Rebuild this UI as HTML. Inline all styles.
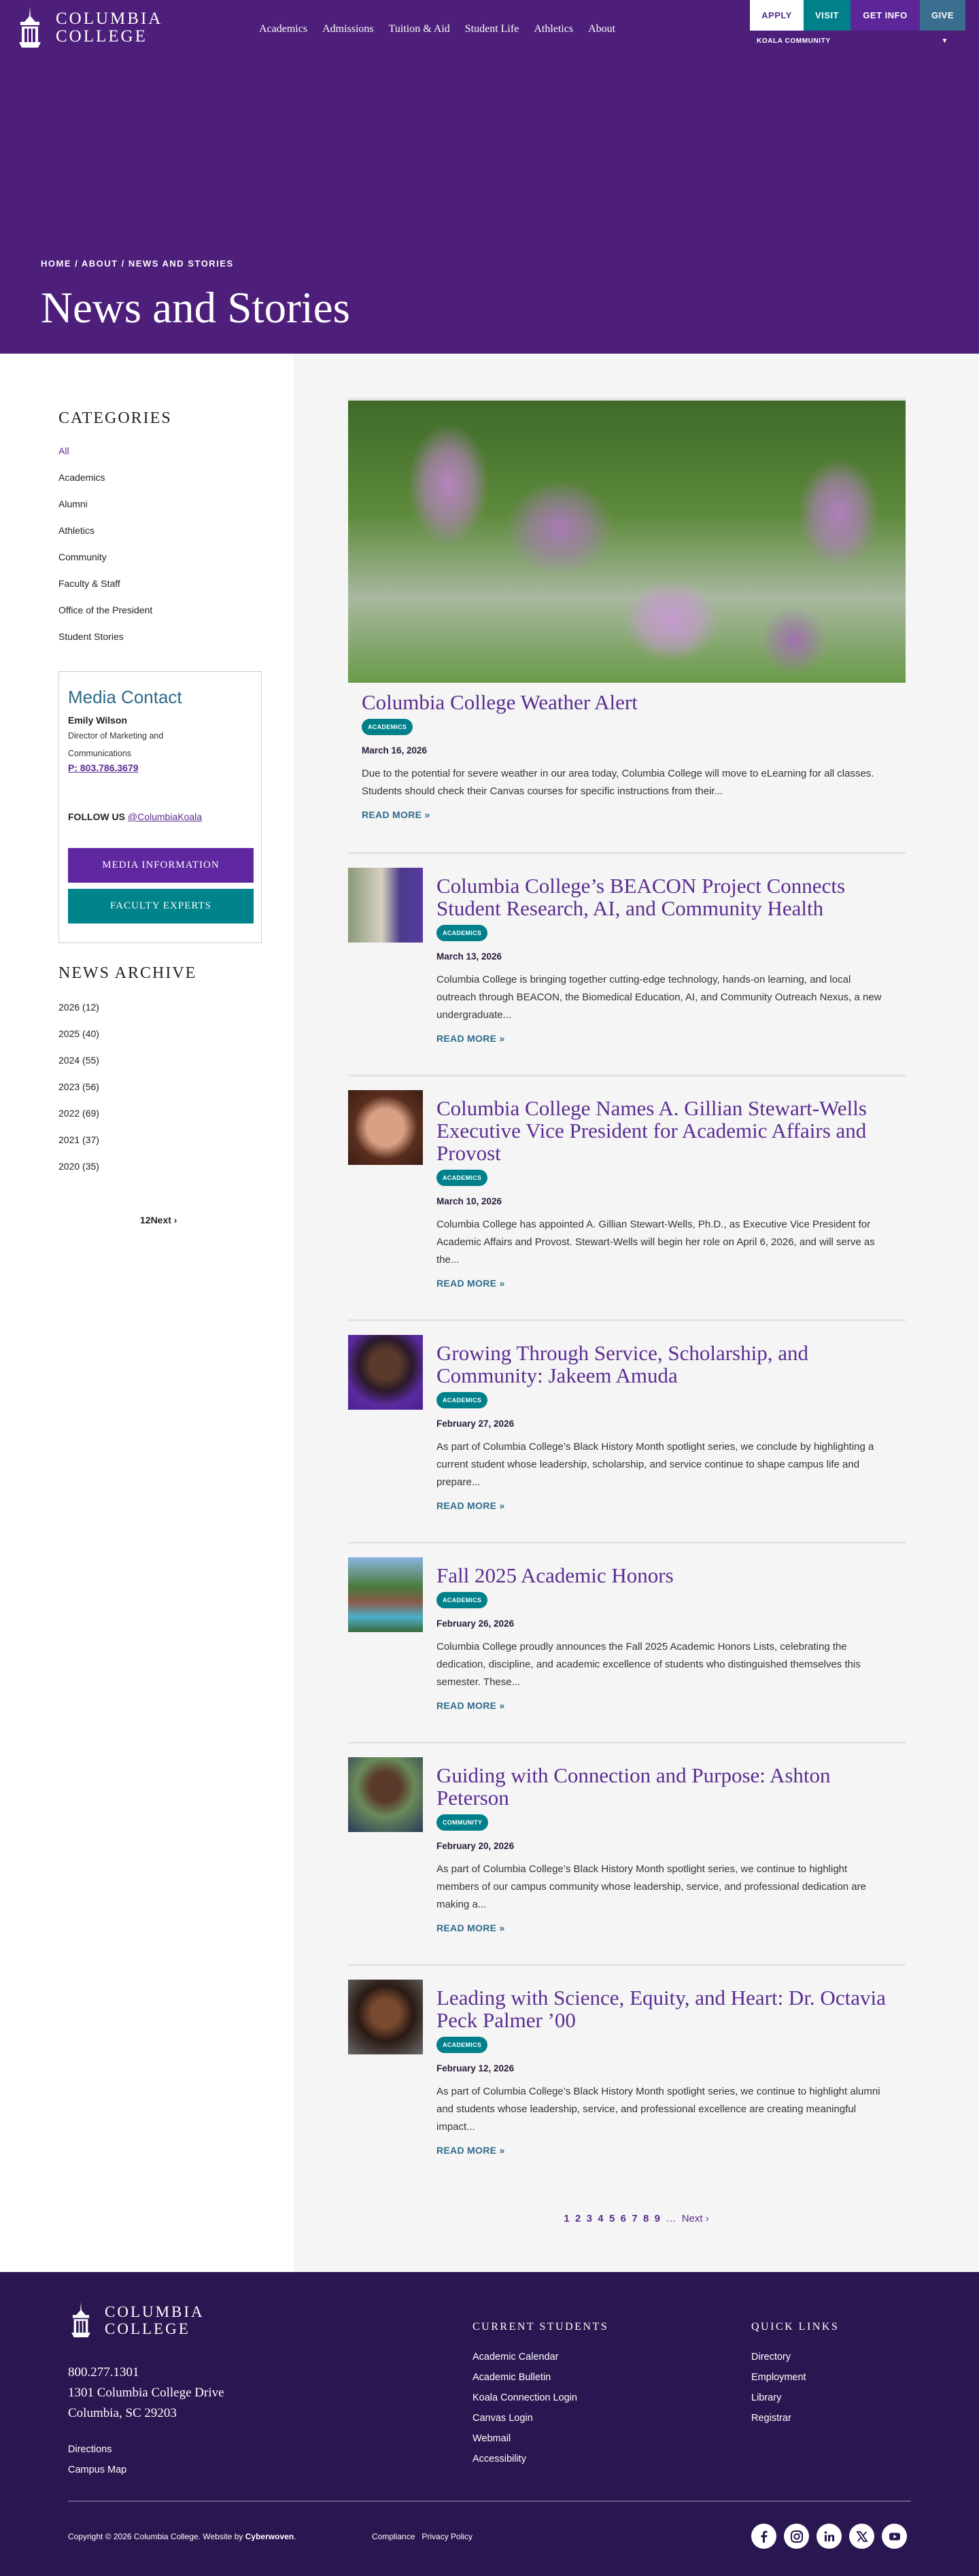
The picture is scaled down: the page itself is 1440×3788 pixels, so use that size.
<!DOCTYPE html>
<html><head><meta charset="utf-8">
<style>
*{margin:0;padding:0;box-sizing:border-box}
body{width:1440px;height:3788px;font-family:"Liberation Sans",sans-serif;background:#fff;color:#222;position:relative;overflow:hidden}
a{color:inherit;text-decoration:none}
.hero{position:absolute;left:0;top:0;width:1440px;height:520px;background:#4d1f7b}
.logo{position:absolute;left:22px;top:10px;display:flex;align-items:center}
.logo .t{font-family:"Liberation Serif",serif;color:#fff;font-size:25px;letter-spacing:3px;line-height:26px;margin-left:16px}
.nav{position:absolute;left:381px;top:34px;display:flex;gap:22px;font-family:"Liberation Serif",serif;color:#fff;font-size:16px}
.btns{position:absolute;left:1103px;top:0;display:flex;height:45px}
.btns div{display:flex;align-items:center;justify-content:center;font-weight:bold;font-size:13px;color:#fff;letter-spacing:.5px}
.koala{position:absolute;left:1113px;top:55px;width:282px;color:#fff;font-size:10px;font-weight:bold;letter-spacing:.6px;display:flex;justify-content:space-between}
.crumb{position:absolute;left:60px;top:380px;color:#fff;font-size:13px;font-weight:bold;letter-spacing:1.5px}
.h1{position:absolute;left:60px;top:416px;color:#fff;font-family:"Liberation Serif",serif;font-size:65px;line-height:74px}
.side{position:absolute;left:0;top:520px;width:432px;height:2821px;background:#fff}
.main{position:absolute;left:432px;top:520px;width:1008px;height:2821px;background:#f5f5f5}
.cat h2,.arch h2{font-family:"Liberation Serif",serif;font-weight:normal;font-size:24px;letter-spacing:2px;color:#222}
.list div{font-size:14px;height:39px;line-height:20px}
.mc{position:absolute;left:86px;top:987px;width:299px;height:400px;border:1px solid #ccc;background:#fff;padding:0 13px}
.mc h3{font-weight:normal;font-size:26px;color:#2c6a86;margin-top:22px;font-family:"Liberation Sans",sans-serif}
.btn{display:flex;align-items:center;justify-content:center;width:273px;height:51px;color:#fff;font-family:"Liberation Serif",serif;font-size:15px;letter-spacing:1px}
.items{position:absolute;left:512px;top:585px;width:820px}
.item{border-top:3px solid #e3e3e3;position:relative}
.item .thumb{position:absolute;left:0;top:20px;width:110px;height:110px}
.c{margin-left:130px}
.title{font-family:"Liberation Serif",serif;font-size:31px;line-height:33px;color:#5b2d91;white-space:nowrap}
.badge{display:inline-block;background:#00808a;color:#fff;font-size:9px;font-weight:bold;height:24px;line-height:24px;padding:0 9px;border-radius:12px;letter-spacing:.3px}
.date{font-size:13.5px;font-weight:bold;color:#2a1a3a;line-height:18px}
.ex{font-size:15px;line-height:26px;color:#333;white-space:nowrap}
.rm{font-size:14px;font-weight:bold;color:#2d6b8a;line-height:18px;letter-spacing:.3px}
.pg{position:absolute;left:0;top:3254px;width:1440px;padding-left:432px;text-align:center;color:#5b2d91;font-size:15px;font-weight:bold}
.foot{position:absolute;left:0;top:3341px;width:1440px;height:447px;background:#2a1650;color:#fff}
.fh{font-family:"Liberation Serif",serif;font-size:16px;letter-spacing:2.5px}
.fl div{font-size:14.5px;height:30px}
.soc{position:absolute;left:1105px;top:3711px;display:flex;gap:11px}
.soc div{width:37px;height:37px;border-radius:50%;background:#fff;display:flex;align-items:center;justify-content:center}
</style></head><body>
<div class="hero">
 <div class="logo">
  <svg width="44" height="62" viewBox="0 0 44 62"><path d="M22 0 L23 14 L30 22 H14 L21 14Z" fill="#fff"/><rect x="8" y="22" width="28" height="5" fill="#fff"/><rect x="10" y="29" width="24" height="3" fill="#fff"/><rect x="10" y="32" width="4" height="20" fill="#fff"/><rect x="30" y="32" width="4" height="20" fill="#fff"/><rect x="18" y="32" width="2" height="20" fill="#fff"/><rect x="24" y="32" width="2" height="20" fill="#fff"/><path d="M6 52 H38 L34 60 H10Z" fill="#fff"/></svg>
  <div class="t">COLUMBIA<br>COLLEGE</div>
 </div>
 <div class="nav"><span>Academics</span><span>Admissions</span><span>Tuition &amp; Aid</span><span>Student Life</span><span>Athletics</span><span>About</span></div>
 <div class="btns"><div style="width:79px;background:#fff;color:#5b2d91">APPLY</div><div style="width:69px;background:#00818a">VISIT</div><div style="width:102px;background:#5c2698">GET INFO</div><div style="width:67px;background:#3a6e8e">GIVE</div></div>
 <div class="koala"><span>KOALA COMMUNITY</span><span>▼</span></div>
 <div class="crumb">HOME / ABOUT / NEWS AND STORIES</div>
 <div class="h1">News and Stories</div>
</div>
<div class="side">
 <div class="cat" style="position:absolute;left:86px;top:82px">
  <h2>CATEGORIES</h2>
  <div class="list" style="margin-top:24px"><div style="color:#5b2d91">All</div><div>Academics</div><div>Alumni</div><div>Athletics</div><div>Community</div><div>Faculty &amp; Staff</div><div>Office of the President</div><div>Student Stories</div></div>
 </div>
</div>
<div class="main"></div>
<div class="mc">
 <h3>Media Contact</h3>
 <div style="font-size:14px;font-weight:bold;margin-top:10px">Emily Wilson</div>
 <div style="font-size:12.5px;line-height:26px;margin-top:2px;color:#333">Director of Marketing and<br>Communications</div>
 <div style="font-size:14px;font-weight:bold;color:#5b2d91;text-decoration:underline">P: 803.786.3679</div>
 <div style="font-size:14px;font-weight:bold;margin-top:56px">FOLLOW US <span style="color:#5b2d91;text-decoration:underline;font-weight:normal">@ColumbiaKoala</span></div>
 <div class="btn" style="background:#5f28a0;margin-top:38px">MEDIA INFORMATION</div>
 <div class="btn" style="background:#00838a;margin-top:9px">FACULTY EXPERTS</div>
</div>
<div class="arch" style="position:absolute;left:86px;top:1418px">
 <h2>NEWS ARCHIVE</h2>
 <div class="list" style="margin-top:26px;line-height:20px"><div>2026 (12)</div><div>2025 (40)</div><div>2024 (55)</div><div>2023 (56)</div><div>2022 (69)</div><div>2021 (37)</div><div>2020 (35)</div></div>
</div>
<div style="position:absolute;left:206px;top:1786px;font-size:14px;font-weight:bold">12Next ›</div>

<div class="items">
 <div class="item" style="padding:1px 0 46px">
  <div style="height:415px;background:radial-gradient(ellipse 60px 90px at 18% 30%,#b784c0 0,rgba(183,132,192,.6) 60%,transparent 100%),radial-gradient(ellipse 70px 60px at 58% 78%,#c69ad0 0,rgba(198,154,208,.6) 60%,transparent 100%),radial-gradient(ellipse 60px 80px at 88% 40%,#b07fbe 0,rgba(176,127,190,.6) 60%,transparent 100%),radial-gradient(ellipse 80px 70px at 38% 45%,#a87ab6 0,rgba(168,122,182,.5) 60%,transparent 100%),radial-gradient(ellipse 50px 50px at 80% 85%,#a070b0 0,transparent 100%),linear-gradient(180deg,#3f6a2a,#5d8a3a 40%,#a9b8a0 70%,#6a9a48);"></div>
  <div style="padding-left:20px">
   <div class="title" style="margin-top:12px">Columbia College Weather Alert</div>
   <div style="margin-top:8px"><span class="badge">ACADEMICS</span></div>
   <div class="date" style="margin-top:14px">March 16, 2026</div>
   <div class="ex" style="margin-top:12px">Due to the potential for severe weather in our area today, Columbia College will move to eLearning for all classes.<br>Students should check their Canvas courses for specific instructions from their...</div>
   <div class="rm" style="margin-top:12px">READ MORE »</div>
  </div>
 </div>
 <div class="item" style="padding:20px 0 44px">
  <div class="thumb" style="background:linear-gradient(90deg,#8a9a7a,#d8d0c0 45%,#4a3a8a 70%,#5a3aa0)"></div>
  <div class="c"><div class="title" style="margin-top:10px">Columbia College’s BEACON Project Connects<br>Student Research, AI, and Community Health</div>
  <div style="margin-top:8px"><span class="badge">ACADEMICS</span></div>
  <div class="date" style="margin-top:14px">March 13, 2026</div>
  <div class="ex" style="margin-top:12px">Columbia College is bringing together cutting-edge technology, hands-on learning, and local<br>outreach through BEACON, the Biomedical Education, AI, and Community Outreach Nexus, a new<br>undergraduate...</div>
  <div class="rm" style="margin-top:12px">READ MORE »</div></div>
 </div>
 <div class="item" style="padding:20px 0 44px">
  <div class="thumb" style="background:radial-gradient(circle at 50% 50%,#d8a084 0 35%,#5a2e1e 60%,#3a1e14)"></div>
  <div class="c"><div class="title" style="margin-top:10px">Columbia College Names A. Gillian Stewart-Wells<br>Executive Vice President for Academic Affairs and<br>Provost</div>
  <div style="margin-top:8px"><span class="badge">ACADEMICS</span></div>
  <div class="date" style="margin-top:14px">March 10, 2026</div>
  <div class="ex" style="margin-top:12px">Columbia College has appointed A. Gillian Stewart-Wells, Ph.D., as Executive Vice President for<br>Academic Affairs and Provost. Stewart-Wells will begin her role on April 6, 2026, and will serve as<br>the...</div>
  <div class="rm" style="margin-top:12px">READ MORE »</div></div>
 </div>
 <div class="item" style="padding:20px 0 44px">
  <div class="thumb" style="background:radial-gradient(circle at 50% 40%,#5a3a2a 0 25%,#2a1a2a 45%,#5a2aa0 70%,#4a2090)"></div>
  <div class="c"><div class="title" style="margin-top:10px">Growing Through Service, Scholarship, and<br>Community: Jakeem Amuda</div>
  <div style="margin-top:8px"><span class="badge">ACADEMICS</span></div>
  <div class="date" style="margin-top:14px">February 27, 2026</div>
  <div class="ex" style="margin-top:12px">As part of Columbia College’s Black History Month spotlight series, we conclude by highlighting a<br>current student whose leadership, scholarship, and service continue to shape campus life and<br>prepare...</div>
  <div class="rm" style="margin-top:12px">READ MORE »</div></div>
 </div>
 <div class="item" style="padding:20px 0 44px">
  <div class="thumb" style="background:linear-gradient(180deg,#8ab4e0,#4a7a3a 40%,#8a5a4a 60%,#4ab0c8 80%,#3a6a3a)"></div>
  <div class="c"><div class="title" style="margin-top:10px">Fall 2025 Academic Honors</div>
  <div style="margin-top:8px"><span class="badge">ACADEMICS</span></div>
  <div class="date" style="margin-top:14px">February 26, 2026</div>
  <div class="ex" style="margin-top:12px">Columbia College proudly announces the Fall 2025 Academic Honors Lists, celebrating the<br>dedication, discipline, and academic excellence of students who distinguished themselves this<br>semester. These...</div>
  <div class="rm" style="margin-top:12px">READ MORE »</div></div>
 </div>
 <div class="item" style="padding:20px 0 44px">
  <div class="thumb" style="background:radial-gradient(circle at 50% 40%,#5a3a2a 0 25%,#6a8a5a 50%,#2a3a5a)"></div>
  <div class="c"><div class="title" style="margin-top:10px">Guiding with Connection and Purpose: Ashton<br>Peterson</div>
  <div style="margin-top:8px"><span class="badge">COMMUNITY</span></div>
  <div class="date" style="margin-top:14px">February 20, 2026</div>
  <div class="ex" style="margin-top:12px">As part of Columbia College’s Black History Month spotlight series, we continue to highlight<br>members of our campus community whose leadership, service, and professional dedication are<br>making a...</div>
  <div class="rm" style="margin-top:12px">READ MORE »</div></div>
 </div>
 <div class="item" style="padding:20px 0 44px">
  <div class="thumb" style="background:radial-gradient(circle at 50% 45%,#7a4a30 0 25%,#2a1a14 50%,#6a6a6a)"></div>
  <div class="c"><div class="title" style="margin-top:10px">Leading with Science, Equity, and Heart: Dr. Octavia<br>Peck Palmer ’00</div>
  <div style="margin-top:8px"><span class="badge">ACADEMICS</span></div>
  <div class="date" style="margin-top:14px">February 12, 2026</div>
  <div class="ex" style="margin-top:12px">As part of Columbia College’s Black History Month spotlight series, we continue to highlight alumni<br>and students whose leadership, service, and professional excellence are creating meaningful<br>impact...</div>
  <div class="rm" style="margin-top:12px">READ MORE »</div></div>
 </div>
</div>
<div class="pg">1 &nbsp;2 &nbsp;3 &nbsp;4 &nbsp;5 &nbsp;6 &nbsp;7 &nbsp;8 &nbsp;9 &nbsp;<span style="font-weight:normal">…</span> &nbsp;<span style="font-weight:normal">Next ›</span></div>

<div class="foot">
 <div style="position:absolute;left:100px;top:41px;display:flex;align-items:center">
  <svg width="38" height="60" viewBox="0 0 44 62"><path d="M22 0 L23 14 L30 22 H14 L21 14Z" fill="#fff"/><rect x="8" y="22" width="28" height="5" fill="#fff"/><rect x="10" y="29" width="24" height="3" fill="#fff"/><rect x="10" y="32" width="4" height="20" fill="#fff"/><rect x="30" y="32" width="4" height="20" fill="#fff"/><rect x="18" y="32" width="2" height="20" fill="#fff"/><rect x="24" y="32" width="2" height="20" fill="#fff"/><path d="M6 52 H38 L34 60 H10Z" fill="#fff"/></svg>
  <div style="font-family:'Liberation Serif',serif;font-size:23px;letter-spacing:3px;line-height:25px;margin-left:16px">COLUMBIA<br>COLLEGE</div>
 </div>
 <div style="position:absolute;left:100px;top:133px;font-family:'Liberation Serif',serif;font-size:19px;line-height:30px">800.277.1301<br>1301 Columbia College Drive<br>Columbia, SC 29203</div>
 <div class="fl" style="position:absolute;left:100px;top:253px"><div>Directions</div><div>Campus Map</div></div>
 <div class="fh" style="position:absolute;left:695px;top:72px">CURRENT STUDENTS</div>
 <div class="fl" style="position:absolute;left:695px;top:117px"><div>Academic Calendar</div><div>Academic Bulletin</div><div>Koala Connection Login</div><div>Canvas Login</div><div>Webmail</div><div>Accessibility</div></div>
 <div class="fh" style="position:absolute;left:1105px;top:72px">QUICK LINKS</div>
 <div class="fl" style="position:absolute;left:1105px;top:117px"><div>Directory</div><div>Employment</div><div>Library</div><div>Registrar</div></div>
 <div style="position:absolute;left:100px;top:336px;width:1240px;height:2px;background:#6a5a88"></div>
 <div style="position:absolute;left:100px;top:382px;font-size:12px">Copyright © 2026 Columbia College. Website by <b>Cyberwoven</b>.</div>
 <div style="position:absolute;left:547px;top:382px;font-size:12px">Compliance &nbsp; Privacy Policy</div>
</div>
<div class="soc">
 <div><svg width="20" height="20" viewBox="0 0 20 20"><path d="M11 19V11h3l.5-3H11V6c0-1 .4-1.6 1.6-1.6H14.6V1.8C14 1.7 13 1.6 12 1.6c-2.5 0-4 1.5-4 4V8H5.5v3H8v8z" fill="#2a1650"/></svg></div>
 <div><svg width="20" height="20" viewBox="0 0 20 20"><rect x="2" y="2" width="16" height="16" rx="5" fill="none" stroke="#2a1650" stroke-width="2"/><circle cx="10" cy="10" r="3.7" fill="none" stroke="#2a1650" stroke-width="2"/><circle cx="14.8" cy="5.2" r="1.1" fill="#2a1650"/></svg></div>
 <div><svg width="18" height="18" viewBox="0 0 18 18"><rect x="2" y="6.5" width="3" height="9.5" fill="#2a1650"/><circle cx="3.5" cy="3" r="1.8" fill="#2a1650"/><path d="M7 6.5h3v1.4c.6-1 1.7-1.7 3.1-1.7 2.3 0 3 1.5 3 3.8V16h-3v-5.3c0-1.2-.3-2-1.4-2-1.2 0-1.7.9-1.7 2V16H7z" fill="#2a1650"/></svg></div>
 <div><svg width="18" height="18" viewBox="0 0 18 18"><path d="M2 2h4.5l9.5 14h-4.5z M2.6 16 8 9.8 M10 8.2 15.4 2" stroke="#2a1650" stroke-width="1.8" fill="none"/></svg></div>
 <div><svg width="20" height="20" viewBox="0 0 20 20"><rect x="2" y="4.5" width="16" height="11" rx="3" fill="#2a1650"/><path d="M8.3 7.3v5.4l4.6-2.7z" fill="#fff"/></svg></div>
</div>
</body></html>
